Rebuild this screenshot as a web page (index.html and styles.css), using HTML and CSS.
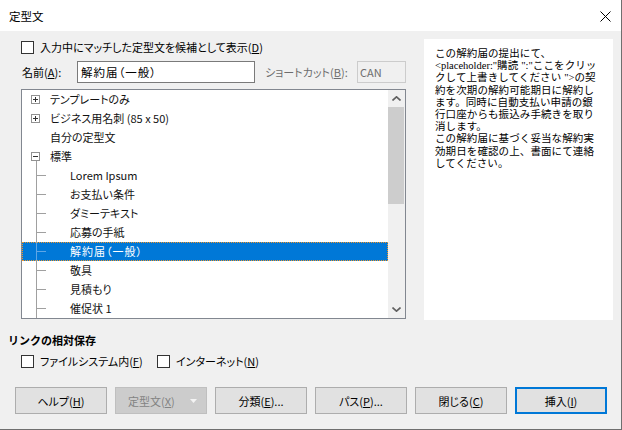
FILE: index.html
```html
<!DOCTYPE html>
<html lang="ja">
<head>
<meta charset="utf-8">
<title>定型文</title>
<link rel="stylesheet" href="styles.css">
</head>
<body>
<div class="window">
  <div class="titlebar">
    <span class="title">定型文</span>
    <span class="close"><svg width="11" height="11" viewBox="0 0 11 11"><path d="M0.5 0.5 L10.5 10.5 M10.5 0.5 L0.5 10.5" stroke="#000" stroke-width="1" fill="none"/></svg></span>
  </div>
  <div class="body">
    <div class="main">
      <div class="left">
        <div class="check"><span class="box"></span><span>入力中にマッチした定型文を候補として表示(<u>D</u>)</span></div>
        <div class="name-row">
          <span class="lbl lbl-name">名前(<u>A</u>):</span>
          <div class="input input-name"><span class="wide">解約届（一般）</span></div>
          <span class="lbl lbl-short">ショートカット(<u>B</u>):</span>
          <div class="input input-short">CAN</div>
        </div>
        <div class="tree">
          <div class="rows">
            <div class="row group"><svg class="exp" width="9" height="9" viewBox="0 0 9 9"><rect x="0.5" y="0.5" width="8" height="8" fill="#fff" stroke="#919191"/><path d="M2 4.5 H7 M4.5 2 V7" stroke="#333"/></svg><span>テンプレートのみ</span></div>
            <div class="row group"><svg class="exp" width="9" height="9" viewBox="0 0 9 9"><rect x="0.5" y="0.5" width="8" height="8" fill="#fff" stroke="#919191"/><path d="M2 4.5 H7 M4.5 2 V7" stroke="#333"/></svg><span>ビジネス用名刺 (85 x 50)</span></div>
            <div class="row plain">自分の定型文</div>
            <div class="row group open"><svg class="exp" width="9" height="9" viewBox="0 0 9 9"><rect x="0.5" y="0.5" width="8" height="8" fill="#fff" stroke="#919191"/><path d="M2 4.5 H7" stroke="#333"/></svg><span>標準</span></div>
            <div class="row child">Lorem Ipsum</div>
            <div class="row child">お支払い条件</div>
            <div class="row child">ダミーテキスト</div>
            <div class="row child">応募の手紙</div>
            <div class="row child sel"><span class="wide">解約届（一般）</span></div>
            <div class="row child">敬具</div>
            <div class="row child">見積もり</div>
            <div class="row child">催促状 1</div>
          </div>
          <div class="scrollbar">
            <div class="sb-btn"><svg width="9" height="5" viewBox="0 0 9 5"><path d="M0.5 4.5 L4.5 0.8 L8.5 4.5" stroke="#606060" stroke-width="1.6" fill="none"/></svg></div>
            <div class="thumb"></div>
            <div class="track"></div>
            <div class="sb-btn"><svg width="9" height="5" viewBox="0 0 9 5"><path d="M0.5 0.5 L4.5 4.2 L8.5 0.5" stroke="#606060" stroke-width="1.6" fill="none"/></svg></div>
          </div>
        </div>
      </div>
      <div class="preview">
        <div class="pl">この解約届の提出にて、</div>
        <div class="pl"><span class="ph">&lt;placeholder:"</span>購読 <span class="ph">":"</span>ここをクリッ</div>
        <div class="pl">クして上書きしてください <span class="ph">"&gt;</span>の契</div>
        <div class="pl">約を次期の解約可能期日に解約し</div>
        <div class="pl">ます。同時に自動支払い申請の銀</div>
        <div class="pl">行口座からも振込み手続きを取り</div>
        <div class="pl">消します。</div>
        <div class="pl">この解約届に基づく妥当な解約実</div>
        <div class="pl">効期日を確認の上、書面にて連絡</div>
        <div class="pl">してください。</div>
      </div>
    </div>
    <div class="links">
      <div class="links-title">リンクの相対保存</div>
      <div class="links-row">
        <div class="check check-fs"><span class="box"></span><span>ファイルシステム内(<u>F</u>)</span></div>
        <div class="check"><span class="box"></span><span>インターネット(<u>N</u>)</span></div>
      </div>
    </div>
    <div class="buttons">
      <div class="btn">ヘルプ(<u>H</u>)</div>
      <div class="btn disabled"><span>定型文(<u>X</u>)</span><svg class="drop" width="7" height="4" viewBox="0 0 7 4"><path d="M0 0 H7 L3.5 4 Z" fill="#f4f4f4"/></svg></div>
      <div class="btn">分類(<u>E</u>)...</div>
      <div class="btn">パス(<u>P</u>)...</div>
      <div class="btn">閉じる(<u>C</u>)</div>
      <div class="btn default">挿入(<u>I</u>)</div>
    </div>
  </div>
</div>
</body>
</html>
```

FILE: styles.css
```css
* { box-sizing: border-box; }
html, body { margin: 0; padding: 0; }
body {
  width: 622px;
  height: 430px;
  overflow: hidden;
  background: #f0f0f0;
  font-family: "Noto Sans CJK JP", "Noto Sans", sans-serif;
  font-size: 11px;
  color: #000;
  font-feature-settings: "palt";
}
u { text-underline-offset: 1px; }

.window {
  width: 622px;
  height: 430px;
  border-right: 1px solid #6f6f6f;
  border-bottom: 1px solid #6f6f6f;
  display: flex;
  flex-direction: column;
}

.titlebar {
  flex: none;
  height: 31px;
  background: #fff;
  display: flex;
  align-items: center;
  justify-content: space-between;
  padding: 1px 10px 0 9px;
}
.title { line-height: 16px; font-size: 11.5px; }
.close svg { display: block; }

.body { flex: 1; display: flex; flex-direction: column; }

.main {
  display: flex;
  padding: 8px 0 0 21px;
  height: 289px;
}
.left {
  width: 385px;
  display: flex;
  flex-direction: column;
}

.check {
  display: flex;
  align-items: center;
  height: 16px;
  line-height: 16px;
  white-space: nowrap;
}
.box {
  width: 13px;
  height: 13px;
  border: 1px solid #333;
  background: #fff;
  margin-right: 6px;
  flex: none;
}

.name-row {
  margin-top: 6px;
  height: 22px;
  display: flex;
  align-items: center;
  white-space: nowrap;
}
.lbl { line-height: 16px; }
.lbl-name { width: 56px; padding-left: 1px; }
.lbl-short { width: 92px; margin-left: 10px; color: #6d6d6d; }
.input {
  height: 22px;
  line-height: 20px;
  padding-left: 3px;
  border: 1px solid #7a7a7a;
  background: #fff;
}
.input-name { width: 178px; font-size: 11.5px; }
.input-short {
  width: 49px;
  border-color: #cccccc;
  background: #f0f0f0;
  color: #6d6d6d;
  padding-left: 2px;
}
.wide { letter-spacing: 1px; }

.tree {
  margin-top: 6px;
  height: 230px;
  border: 1px solid #828790;
  background: #fff;
  display: flex;
}
.rows { width: 366px; }
.row {
  height: 19px;
  line-height: 19px;
  display: flex;
  align-items: center;
  white-space: nowrap;
  color: #111;
}
.row.group { padding-left: 9px; }
.row.group .exp { margin-right: 10px; flex: none; }
.row.plain { padding-left: 28px; }
.row.open {
  background: linear-gradient(#a0a0a0, #a0a0a0) 14px 14px / 1px 5px no-repeat;
}
.row.child {
  padding-left: 48px;
  background:
    linear-gradient(#a0a0a0, #a0a0a0) 14px 0 / 1px 100% no-repeat,
    linear-gradient(#a0a0a0, #a0a0a0) 14px 9px / 10px 1px no-repeat;
}
.row.child.sel {
  padding-left: 47px;
  color: #fff;
  border: 1px dotted #f0962a;
  background-color: #0078d7;
  background-origin: border-box;
  background-image:
    linear-gradient(#5ea6e6, #5ea6e6),
    linear-gradient(#5ea6e6, #5ea6e6);
}

.scrollbar {
  width: 17px;
  background: #f0f0f0;
  display: flex;
  flex-direction: column;
}
.sb-btn {
  height: 17px;
  display: flex;
  align-items: center;
  justify-content: center;
  flex: none;
}
.sb-btn svg { display: block; }
.thumb {
  height: 97px;
  margin-right: 1px;
  background: #cdcdcd;
  flex: none;
}
.track { flex: 1; }

.preview {
  margin-left: 18px;
  width: 189px;
  height: 281px;
  background: #fff;
  padding: 8px 0 0 11px;
  font-family: "Liberation Sans", "Noto Sans CJK JP", sans-serif;
  font-size: 10.5px;
  font-feature-settings: normal;
  letter-spacing: 0.1px;
  white-space: nowrap;
  color: #000;
}
.pl { height: 12.2px; line-height: 12.2px; }
.ph {
  font-family: "Liberation Serif", "Noto Sans CJK JP", serif;
  font-size: 10.5px;
  letter-spacing: 0;
}

.links { padding-left: 8px; }
.links-title {
  margin-top: 12px;
  line-height: 16px;
  font-weight: bold;
  font-feature-settings: normal;
}
.links-row {
  margin-top: 5px;
  padding-left: 13px;
  display: flex;
}
.check-fs { width: 136px; }

.buttons {
  margin-top: 18px;
  padding-left: 15px;
  display: flex;
  gap: 8px;
}
.btn {
  width: 92px;
  height: 27px;
  background: #e1e1e1;
  border: 1px solid #adadad;
  display: flex;
  align-items: center;
  justify-content: center;
  line-height: 16px;
  white-space: nowrap;
}
.btn.disabled {
  background: #cccccc;
  border-color: #bfbfbf;
  color: #838383;
  justify-content: flex-start;
  padding-left: 12px;
}
.btn.disabled .drop { margin-left: 15px; display: block; }
.btn.default {
  border: 2px solid #0078d7;
}
```
